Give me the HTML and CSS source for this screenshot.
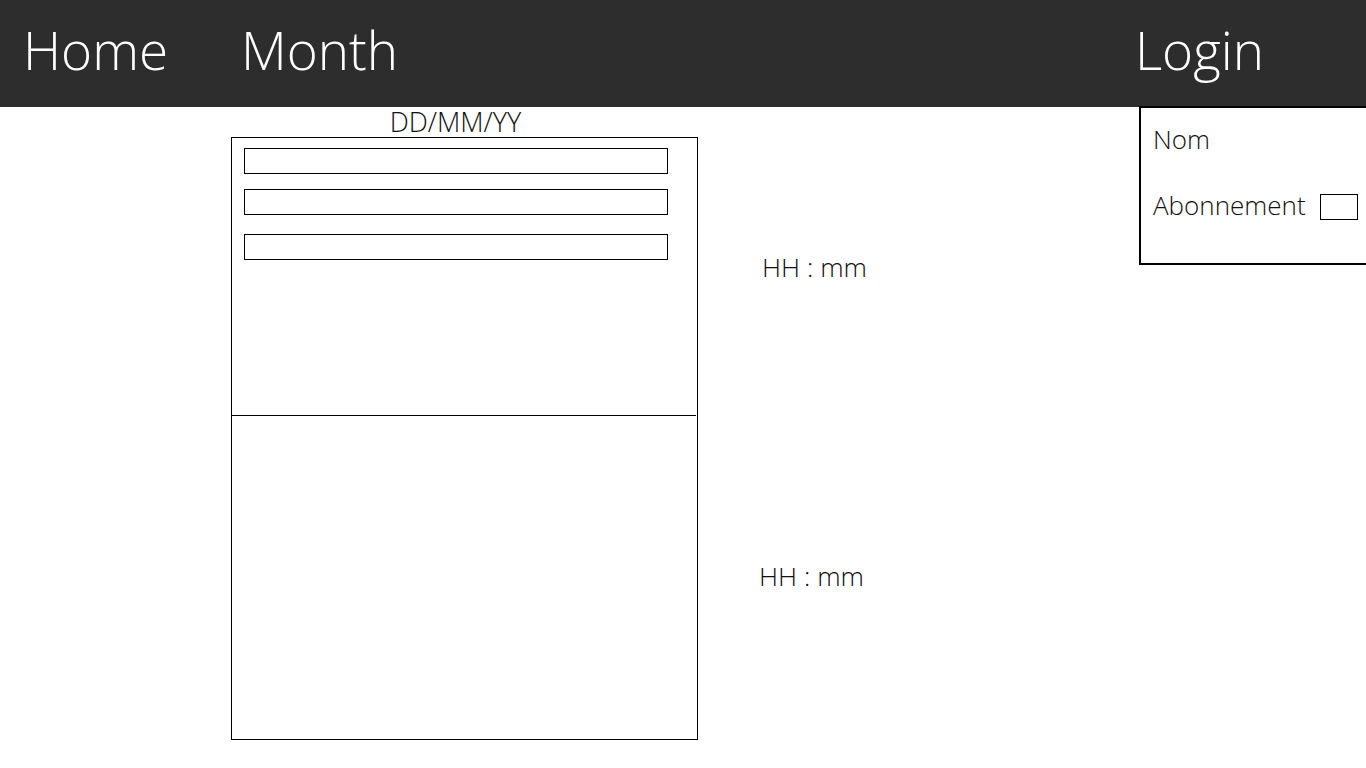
FILE: index.html
```html
<!DOCTYPE html>
<html lang="fr">
<head>
<meta charset="utf-8">
<title>Calendrier</title>
<link rel="stylesheet" href="styles.css">
</head>
<body>
<header class="topbar">
  <nav class="nav">
    <a class="nav-item nav-home">Home</a>
    <a class="nav-item nav-month">Month</a>
    <a class="nav-item nav-login">Login</a>
  </nav>
  <div class="login-panel">
    <div class="login-row">Nom</div>
    <div class="login-row login-sub">Abonnement <span class="check"></span></div>
  </div>
</header>
<main class="content">
  <section class="day">
    <div class="day-date">DD/MM/YY</div>
    <div class="day-box">
      <div class="day-top">
        <div class="slot"></div>
        <div class="slot"></div>
        <div class="slot slot-last"></div>
      </div>
      <div class="day-bottom"></div>
    </div>
  </section>
  <section class="times">
    <div class="time time-1">HH : mm</div>
    <div class="time time-2">HH : mm</div>
  </section>
</main>
</body>
</html>
```
FILE: styles.css
```css
* { box-sizing: border-box; }
html, body { margin: 0; padding: 0; }
body {
  font-family: "Open Sans", "Noto Sans", sans-serif;
  font-weight: 300;
  color: #000;
  background: #fff;
  width: 1366px;
  height: 768px;
  overflow: hidden;
}
.topbar {
  position: relative;
  height: 107px;
  background: #2d2d2d;
}
.nav {
  display: flex;
  align-items: center;
  height: 107px;
  padding-left: 23px;
}
.nav-item {
  color: #fff;
  font-size: 53px;
  line-height: 1;
  padding-bottom: 9px;
}
.nav-home { width: 218px; }
.nav-month { flex: 1; }
.nav-login { margin-right: 102px; }
.login-panel {
  position: absolute;
  left: 1139px;
  top: 106px;
  width: 240px;
  height: 159px;
  background: #fff;
  border: 2px solid #000;
  padding: 14px 0 0 12px;
  font-size: 26px;
  color: #111;
}
.login-row { height: 34px; line-height: 34px; }
.login-sub {
  margin-top: 32px;
  display: flex;
  align-items: center;
}
.check {
  display: inline-block;
  width: 38px;
  height: 26px;
  border: 1px solid #000;
  margin-left: 14px;
  margin-top: 4px;
}
.content {
  display: flex;
  padding-left: 231px;
}
.day { width: 467px; }
.day-date {
  font-size: 27px;
  line-height: 30px;
  text-align: center;
  padding-right: 18px;
  color: #111;
}
.day-box {
  border: 1px solid #000;
  height: 603px;
  display: flex;
  flex-direction: column;
}
.day-top {
  height: 278px;
  border-bottom: 1px solid #000;
  padding: 10px 0 0 12px;
  margin-right: 1px;
}
.slot {
  width: 424px;
  height: 26px;
  border: 1px solid #000;
  margin-bottom: 15px;
}
.slot:nth-child(2) { margin-bottom: 19px; }
.day-bottom { flex: 1; }
.times {
  display: flex;
  flex-direction: column;
  padding-top: 144px;
}
.time {
  font-size: 26.5px;
  line-height: 32px;
  color: #111;
}
.time-1 { margin-left: 64px; }
.time-2 { margin-left: 61px; margin-top: 277px; }
```
